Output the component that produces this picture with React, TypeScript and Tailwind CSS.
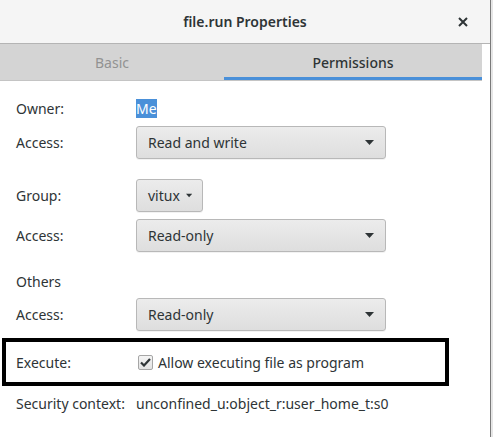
import React from "react";

function Combo({ label, wide = true }: { label: string; wide?: boolean }) {
  return (
    <div
      className={`flex h-[33px] items-center rounded-[3px] border border-[#b8b8b8] bg-gradient-to-b from-[#ececec] to-[#dedede] pl-[11px] shadow-[0_1px_0_rgba(0,0,0,0.05)] ${
        wide ? "w-[250px] pr-[11px]" : "w-[67px] pr-[10px]"
      }`}
    >
      <span>{label}</span>
      <svg width="9" height="5" viewBox="0 0 9 5" className={wide ? "ml-auto" : "ml-[6px]"}>
        <path d="M0 0 L9 0 L4.5 5 Z" fill="#2e3436" />
      </svg>
    </div>
  );
}

function Row({ label, children, className = "" }: { label: string; children?: React.ReactNode; className?: string }) {
  return (
    <div className={`flex items-center ${className}`}>
      <span className="w-[120px] shrink-0">{label}</span>
      {children}
    </div>
  );
}

export default function App() {
  return (
    <div
      className="flex h-[437px] w-[493px] bg-[#e6e6e6] text-[14px] text-[#2e3436]"
      style={{ fontFamily: '"Noto Sans", "DejaVu Sans", sans-serif' }}
    >
      <div className="flex w-[490px] flex-col bg-white">
        <div className="relative flex h-[44px] items-center justify-center border-b border-[#b4b4b4] bg-[#f5f5f5]">
          <span className="font-semibold text-[#2e3436]">file.run Properties</span>
          <svg width="10" height="10" viewBox="0 0 10 10" className="absolute right-[22px] top-[17px]">
            <path d="M1 1 L9 9 M9 1 L1 9" stroke="#2e3436" strokeWidth="2" />
          </svg>
        </div>
        <div className="flex h-[37px] w-[482px] border-b border-[#c4c4c4] bg-[#d4d4d4]">
          <div className="flex w-[224px] items-center justify-center text-[#929292]">Basic</div>
          <div className="flex flex-1 items-center justify-center border-b-[3px] border-[#4a90d9] pt-[3px] font-medium">
            Permissions
          </div>
        </div>
        <div className="flex flex-col pl-4 pt-[17px]">
          <Row label="Owner:">
            <span className="bg-[#4a90d9] leading-[19px] text-white">Me</span>
          </Row>
          <Row label="Access:" className="mt-[7px]">
            <Combo label="Read and write" />
          </Row>
          <Row label="Group:" className="mt-[20px]">
            <Combo label="vitux" wide={false} />
          </Row>
          <Row label="Access:" className="mt-[7px]">
            <Combo label="Read-only" />
          </Row>
          <div className="mt-[20px] leading-[20px]">Others</div>
          <Row label="Access:" className="mt-[6px]">
            <Combo label="Read-only" />
          </Row>
        </div>
        <div className="ml-[2px] mt-[7px] flex h-[48px] w-[447px] items-center border-[4px] border-black pl-[10px]">
          <span className="w-[122px] shrink-0">Execute:</span>
          <span className="mr-[5px] flex h-[15px] w-[15px] items-center justify-center rounded-[2px] border border-[#a6a6a6] bg-gradient-to-b from-[#f4f4f4] to-[#e2e2e2]">
            <svg width="11" height="9" viewBox="0 0 11 9">
              <path d="M1 4.5 L4 7.5 L10 1" stroke="#2e3436" strokeWidth="2.2" fill="none" />
            </svg>
          </span>
          <span>Allow executing file as program</span>
        </div>
        <div className="mt-[7px] flex pl-4">
          <span className="w-[120px] shrink-0">Security context:</span>
          <span>unconfined_u:object_r:user_home_t:s0</span>
        </div>
      </div>
      <div className="w-[1px] bg-[#7a7a7a]" />
    </div>
  );
}
